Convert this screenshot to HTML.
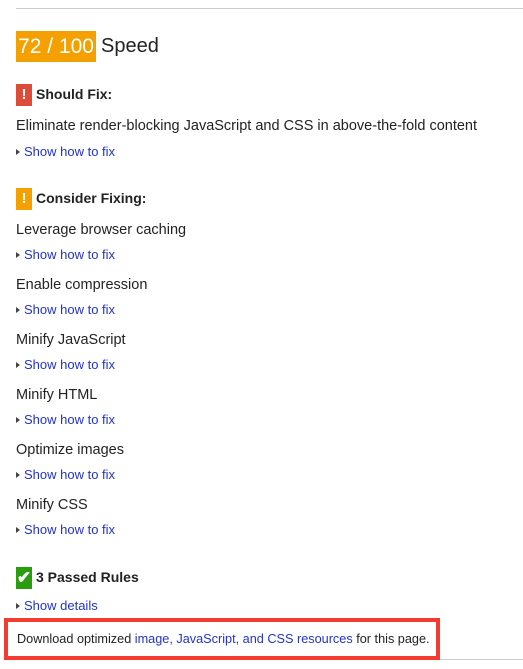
<!DOCTYPE html>
<html><head><meta charset="utf-8"><style>
body{margin:0;width:523px;height:669px;background:#fff;position:relative;overflow:hidden;font-family:"Liberation Sans",Arial,sans-serif;color:#222}
.a{position:absolute;white-space:nowrap}
.t{font-size:14.5px;left:16px;color:#222}
.l{font-size:13px;left:16px;color:#2233cc}
.l:before{content:"";display:inline-block;border-left:4px solid #444;border-top:3.5px solid transparent;border-bottom:3.5px solid transparent;margin-right:4px;vertical-align:1px}
.h{font-size:14px;font-weight:bold;left:16px;color:#222}
.ic{display:inline-block;width:16px;height:22px;color:#fff;text-align:center;font-weight:bold;font-size:15px;line-height:22px;vertical-align:middle;margin-right:4px}
</style></head><body>
<div class="a" style="left:16px;top:8px;width:507px;height:1px;background:#ccc"></div>
<div class="a" style="left:16px;top:31px;height:31px;width:80px;background:#f4a000;color:#fff;font-size:21px;line-height:31px;text-align:center">72 / 100</div>
<div class="a" style="left:101px;top:31px;font-size:20px;line-height:31px;color:#222">Speed</div>

<div class="a h" style="top:83px;line-height:22px"><span class="ic" style="background:#dd4b39">!</span>Should Fix:</div>
<div class="a t" style="top:118px">Eliminate render-blocking JavaScript and CSS in above-the-fold content</div>
<div class="a l" style="top:144px">Show how to fix</div>

<div class="a h" style="top:187px;line-height:22px"><span class="ic" style="background:#f4a000">!</span>Consider Fixing:</div>
<div class="a t" style="top:222px">Leverage browser caching</div>
<div class="a l" style="top:247px">Show how to fix</div>
<div class="a t" style="top:277px">Enable compression</div>
<div class="a l" style="top:302px">Show how to fix</div>
<div class="a t" style="top:332px">Minify JavaScript</div>
<div class="a l" style="top:357px">Show how to fix</div>
<div class="a t" style="top:387px">Minify HTML</div>
<div class="a l" style="top:412px">Show how to fix</div>
<div class="a t" style="top:442px">Optimize images</div>
<div class="a l" style="top:467px">Show how to fix</div>
<div class="a t" style="top:497px">Minify CSS</div>
<div class="a l" style="top:522px">Show how to fix</div>

<div class="a h" style="top:566px;line-height:22px"><span class="ic" style="background:#2a9d0f;font-size:17px">✔</span>3 Passed Rules</div>
<div class="a l" style="top:598px">Show details</div>

<div class="a" style="left:440px;top:659px;width:83px;height:1px;background:#ccc"></div>
<div class="a" style="left:4px;top:618px;width:419px;height:34px;border:4px solid #f33b30;font-size:12.7px;line-height:34px;padding-left:9px">Download optimized <span style="color:#2233cc">image, JavaScript, and CSS resources</span> for this page.</div>
</body></html>
